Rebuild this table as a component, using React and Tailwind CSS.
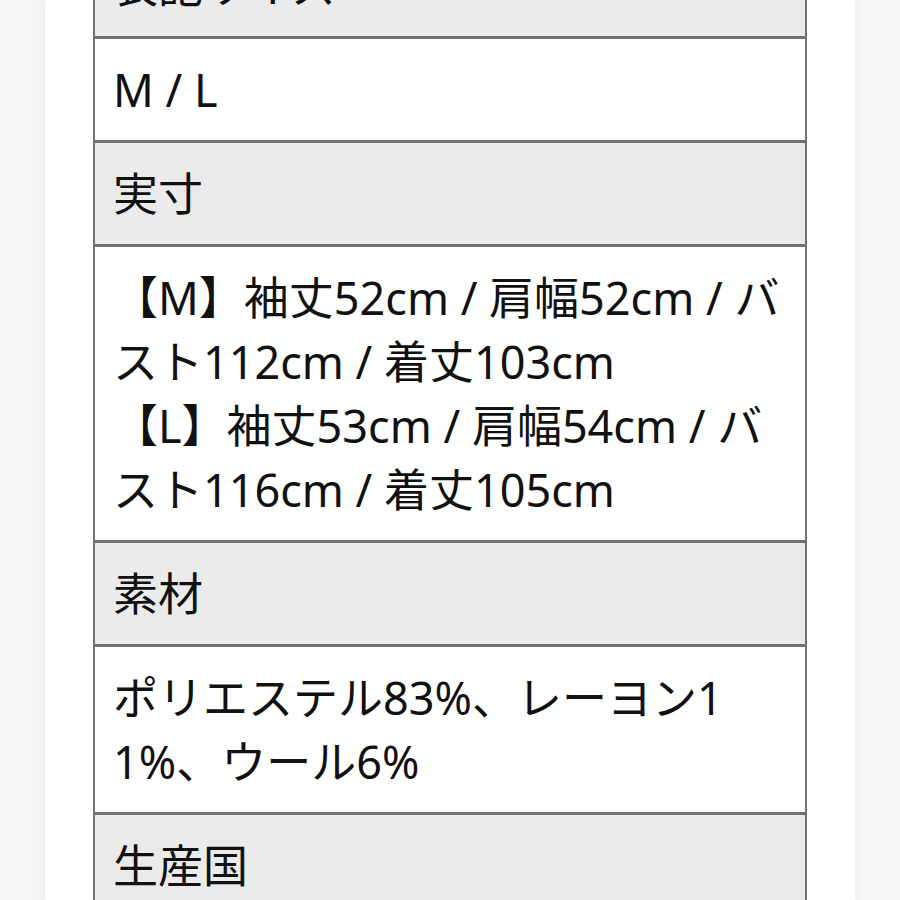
export default function App() {
  const rows = [
    { head: true, lines: ["表記サイズ"] },
    { head: false, lines: ["M / L"] },
    { head: true, lines: ["実寸"] },
    {
      head: false,
      lines: [
        "【M】袖丈52cm / 肩幅52cm / バ",
        "スト112cm / 着丈103cm",
        "【L】袖丈53cm / 肩幅54cm / バ",
        "スト116cm / 着丈105cm",
      ],
    },
    { head: true, lines: ["素材"] },
    { head: false, lines: ["ポリエステル83%、レーヨン1", "1%、ウール6%"] },
    { head: true, lines: ["生産国"] },
    { head: false, lines: ["日本"] },
  ];

  return (
    <div
      className="w-[900px] h-[900px] overflow-hidden bg-[#f6f6f6] flex justify-center"
      style={{ fontFamily: '"Noto Sans", "Noto Sans CJK JP", sans-serif' }}
    >
      <div className="w-[810px] h-full bg-white shadow-[0_0_10px_rgba(0,0,0,0.05)] pl-[48px]">
        <div className="w-[714px] -mt-[65px] border-x-2 border-[#727272] flex flex-col">
          {rows.map((row, i) => (
            <div
              key={i}
              className={
                "border-b-[3px] border-[#727272] px-[18px] pt-[19px] pb-[18px] text-[45px] leading-[64px] text-[#111] whitespace-nowrap " +
                (row.head ? "bg-[#ebebeb]" : "bg-white")
              }
            >
              {row.lines.map((line, j) => (
                <div key={j}>{line}</div>
              ))}
            </div>
          ))}
        </div>
      </div>
    </div>
  );
}
